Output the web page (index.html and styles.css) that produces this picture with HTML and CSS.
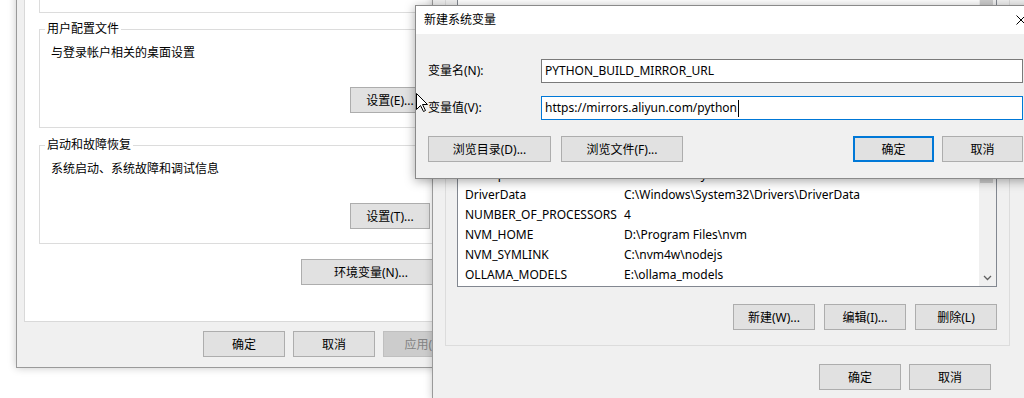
FILE: index.html
```html
<!DOCTYPE html>
<html lang="zh-CN">
<head>
    <meta charset="UTF-8">
    <title>新建系统变量</title>
    <link rel="stylesheet" href="styles.css">
</head>
<body>
    <div class="desktop">
        <!-- 系统属性 (behind) -->
        <section class="window sysprops">
            <div class="tabpanel">
                <div class="group group-prev"></div>
                <div class="group">
                    <div class="group-title">用户配置文件</div>
                    <p class="group-text">与登录帐户相关的桌面设置</p>
                    <button class="btn btn-set">设置(E)...</button>
                </div>
                <div class="group group-second">
                    <div class="group-title">启动和故障恢复</div>
                    <p class="group-text">系统启动、系统故障和调试信息</p>
                    <button class="btn btn-set">设置(T)...</button>
                </div>
                <div class="panel-actions">
                    <button class="btn btn-env">环境变量(N)...</button>
                </div>
            </div>
            <div class="window-actions">
                <button class="btn">确定</button>
                <button class="btn">取消</button>
                <button class="btn" disabled>应用(A)</button>
            </div>
        </section>

        <!-- 环境变量 -->
        <section class="window envvars">
            <div class="group env-group">
                <div class="listview">
                    <div class="rows">
                        <div class="row"><span class="col-name">ComSpec</span><span>C:\Windows\system32\cmd.exe</span></div>
                        <div class="row"><span class="col-name">DriverData</span><span>C:\Windows\System32\Drivers\DriverData</span></div>
                        <div class="row"><span class="col-name">NUMBER_OF_PROCESSORS</span><span>4</span></div>
                        <div class="row"><span class="col-name">NVM_HOME</span><span>D:\Program Files\nvm</span></div>
                        <div class="row"><span class="col-name">NVM_SYMLINK</span><span>C:\nvm4w\nodejs</span></div>
                        <div class="row"><span class="col-name">OLLAMA_MODELS</span><span>E:\ollama_models</span></div>
                    </div>
                    <div class="scrollbar">
                        <div class="thumb"></div>
                        <div class="track"></div>
                        <div class="arrow">
                            <svg width="9" height="6" viewBox="0 0 9 6"><polyline points="1,1 4.5,4.5 8,1" fill="none" stroke="#606060" stroke-width="1.3"/></svg>
                        </div>
                    </div>
                </div>
                <div class="list-actions">
                    <button class="btn">新建(W)...</button>
                    <button class="btn">编辑(I)...</button>
                    <button class="btn">删除(L)</button>
                </div>
            </div>
            <div class="env-actions">
                <button class="btn">确定</button>
                <button class="btn">取消</button>
            </div>
        </section>

        <!-- 新建系统变量 -->
        <section class="window newvar">
            <div class="titlebar">
                <span class="title">新建系统变量</span>
                <span class="close">
                    <svg width="10" height="10" viewBox="0 0 10 10"><path d="M0.5 0.5 L9.5 9.5 M9.5 0.5 L0.5 9.5" stroke="#000" stroke-width="1"/></svg>
                </span>
            </div>
            <div class="newvar-body">
                <div class="field-row">
                    <label class="field-label">变量名(N):</label>
                    <div class="field">PYTHON_BUILD_MIRROR_URL</div>
                </div>
                <div class="field-row field-row-second">
                    <label class="field-label">变量值(V):</label>
                    <div class="field field-focus">https://mirrors.aliyun.com/python<span class="caret"></span></div>
                </div>
                <div class="newvar-actions">
                    <button class="btn btn-browse">浏览目录(D)...</button>
                    <button class="btn btn-browse btn-browse-file">浏览文件(F)...</button>
                    <span class="spacer"></span>
                    <button class="btn btn-ok btn-default">确定</button>
                    <button class="btn btn-ok btn-cancel">取消</button>
                </div>
            </div>
        </section>

        <svg class="cursor" width="13" height="20" viewBox="0 0 13 20">
            <polygon points="0.5,0.5 0.5,16.5 4.5,12.5 7.5,18.5 9.5,17.5 6.5,11.5 11.5,11.5" fill="#fff" stroke="#000" stroke-width="1" stroke-linejoin="miter"/>
        </svg>
    </div>
</body>
</html>
```

FILE: styles.css
```css
* {
    box-sizing: border-box;
}
body {
    margin: 0;
    background: #fff;
    font-family: "Noto Sans", "Noto Sans CJK SC", sans-serif;
    font-size: 12px;
    line-height: 16px;
    color: #000;
}
.desktop {
    position: relative;
    width: 1024px;
    height: 398px;
    overflow: hidden;
    background: #fff;
}
.window {
    position: absolute;
    background: #f0f0f0;
    border: 1px solid #9a9a9a;
}
.btn {
    display: block;
    height: 26px;
    padding: 0;
    background: #e1e1e1;
    border: 1px solid #adadad;
    font-family: inherit;
    font-size: 12px;
    color: #000;
}
.btn:disabled {
    background: #cccccc;
    border-color: #bfbfbf;
    color: #838383;
}

/* 系统属性 */
.sysprops {
    left: 16px;
    top: -60px;
    width: 457px;
    padding-bottom: 10px;
    box-shadow: 0 0 8px rgba(0, 0, 0, 0.22);
}
.tabpanel {
    margin: 9px 7px 0;
    padding: 0 14px 36px;
    background: #fff;
    border: 1px solid #d9d9d9;
}
.group {
    border: 1px solid #dcdcdc;
    padding: 0 19px 14px 11px;
    margin-top: 16px;
}
.group-prev {
    margin-top: 10px;
    height: 52px;
}
.group-second {
    margin-top: 17px;
}
.group-title {
    width: fit-content;
    margin: -9px 0 0 -6px;
    padding: 0 2px;
    background: #fff;
}
.group-text {
    margin: 8px 0 0;
}
.btn-set {
    width: 80px;
    margin: 26px 0 0 auto;
}
.panel-actions {
    display: flex;
    justify-content: flex-end;
    margin-top: 15px;
    padding-right: 9px;
}
.btn-env {
    width: 140px;
}
.window-actions {
    display: flex;
    justify-content: flex-end;
    gap: 8px;
    margin-top: 9px;
    padding-right: 7px;
}
.window-actions .btn {
    width: 82px;
}

/* 环境变量 */
.envvars {
    left: 432px;
    top: -40px;
    width: 600px;
    height: 440px;
    padding: 0 21px 0 12px;
    box-shadow: 0 0 8px rgba(0, 0, 0, 0.22);
}
.env-group {
    margin-top: 9px;
    padding: 9px 12px 15px 11px;
}
.listview {
    display: flex;
    height: 307px;
    background: #fff;
    border: 1px solid #828790;
}
.rows {
    flex: 1;
    display: flex;
    flex-direction: column;
    justify-content: flex-end;
    padding-bottom: 1px;
}
.row {
    display: flex;
    align-items: center;
    height: 20px;
    padding-left: 7px;
    white-space: nowrap;
}
.col-name {
    width: 159px;
    flex-shrink: 0;
}
.scrollbar {
    width: 17px;
    display: flex;
    flex-direction: column;
    background: #f0f0f0;
}
.thumb {
    height: 202px;
    margin: 0 3px 0 1px;
    background: #cdcdcd;
}
.track {
    flex: 1;
}
.arrow {
    height: 17px;
    display: flex;
    align-items: center;
    justify-content: center;
}
.list-actions {
    display: flex;
    justify-content: flex-end;
    gap: 9px;
    margin-top: 17px;
}
.list-actions .btn {
    width: 82px;
}
.env-actions {
    display: flex;
    justify-content: flex-end;
    gap: 8px;
    margin: 18px 19px 0 0;
}
.env-actions .btn {
    width: 82px;
}

/* 新建系统变量 */
.newvar {
    left: 415px;
    top: 5px;
    width: 630px;
    border-color: #8a8a8a;
    box-shadow: 0 2px 10px rgba(0, 0, 0, 0.35);
}
.titlebar {
    display: flex;
    align-items: center;
    justify-content: space-between;
    height: 28px;
    padding-left: 8px;
    background: #fff;
}
.close {
    width: 46px;
    height: 28px;
    display: flex;
    align-items: center;
    justify-content: center;
}
.newvar-body {
    padding: 25px 21px 16px 12px;
}
.field-row {
    display: flex;
    align-items: center;
}
.field-row-second {
    margin-top: 13px;
}
.field-label {
    width: 113px;
    flex-shrink: 0;
}
.field {
    flex: 1;
    height: 24px;
    padding: 0 3px;
    line-height: 22px;
    background: #fff;
    border: 1px solid #7a7a7a;
    white-space: nowrap;
}
.field-focus {
    border-color: #0078d7;
}
.caret {
    display: inline-block;
    width: 1px;
    height: 17px;
    margin-left: 1px;
    background: #000;
    vertical-align: middle;
}
.newvar-actions {
    display: flex;
    margin-top: 16px;
}
.btn-browse {
    width: 123px;
}
.btn-browse-file {
    width: 122px;
    margin-left: 10px;
}
.spacer {
    flex: 1;
}
.btn-ok {
    width: 81px;
}
.btn-default {
    border: 2px solid #0078d7;
}
.btn-cancel {
    margin-left: 8px;
}
.cursor {
    position: absolute;
    left: 416px;
    top: 93px;
}
```
